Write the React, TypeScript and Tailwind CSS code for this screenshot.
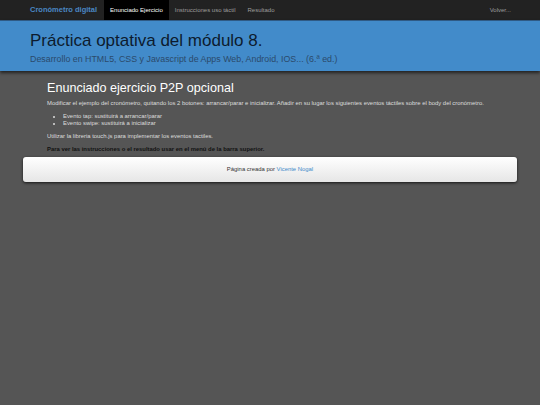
const FONT = { fontFamily: '"Liberation Sans", Arial, sans-serif' };

const NAV_ITEMS = [
  { label: 'Enunciado Ejercicio', active: true },
  { label: 'Instrucciones uso táctil', active: false },
  { label: 'Resultado', active: false },
];

const NavBar = () => (
  <nav className="flex h-[20px] items-stretch bg-[#222222] pl-[30px] pr-[29px]">
    <a className="flex items-center pr-[7px] text-[7.5px] font-bold text-[#4a87c4]">
      Cronómetro digital
    </a>
    {NAV_ITEMS.map((item) => (
      <a
        key={item.label}
        className={
          item.active
            ? 'flex items-center bg-black px-[6px] text-[6px] text-white'
            : 'flex items-center px-[6px] text-[6px] text-[#9d9d9d]'
        }
      >
        {item.label}
      </a>
    ))}
    <a className="ml-auto flex items-center text-[6px] text-[#9d9d9d]">Volver...</a>
  </nav>
);

const Header = () => (
  <header className="h-[51px] border-t border-[#2f5a85] bg-[#428bca] px-[30px] pt-[9px] shadow-[0_2px_3px_rgba(0,0,0,0.6)]">
    <h1 className="text-[17px] leading-[21px] text-[#0d1b2e]">Práctica optativa del módulo 8.</h1>
    <p className="mt-[3px] text-[8.85px] leading-[11px] text-[#2b4a6a]">
      Desarrollo en HTML5, CSS y Javascript de Apps Web, Android, IOS... (6.ª ed.)
    </p>
  </header>
);

const Content = () => (
  <section className="px-[47px] pt-[9px]">
    <h2 className="text-[12.6px] leading-[16px] text-white">Enunciado ejercicio P2P opcional</h2>
    <p className="mt-[3px] text-[5.9px] leading-[8px] text-[#dddddd]">
      Modificar el ejemplo del cronómetro, quitando los 2 botones: arrancar/parar e inicializar. Añadir en
      su lugar los siguientes eventos táctiles sobre el body del cronómetro.
    </p>
    <ul className="mt-[6px] list-disc pl-[16px] text-[5.9px] leading-[7px] text-[#dddddd]">
      <li>Evento tap: sustituirá a arrancar/parar</li>
      <li>Evento swipe: sustituirá a inicializar</li>
    </ul>
    <p className="mt-[5px] text-[5.9px] leading-[8px] text-[#dddddd]">
      Utilizar la libreria touch.js para implementar los eventos tactiles.
    </p>
    <p className="mt-[5px] text-[5.9px] font-bold leading-[8px] text-[#111111]">
      Para ver las instrucciones o el resultado usar en el menú de la barra superior.
    </p>
  </section>
);

const Footer = () => (
  <footer className="mx-[23px] mt-[4px] flex h-[25px] items-center justify-center rounded-[3px] bg-gradient-to-b from-white to-[#e6e6e6] text-[5.9px] text-[#333333] shadow-[0_1px_3px_rgba(0,0,0,0.75)]">
    <span>
      Página creada por <a className="text-[#428bca]">Vicente Nogal</a>
    </span>
  </footer>
);

export default function App() {
  return (
    <div style={FONT} className="min-h-[405px] bg-[#555555]">
      <NavBar />
      <Header />
      <Content />
      <Footer />
    </div>
  );
}
